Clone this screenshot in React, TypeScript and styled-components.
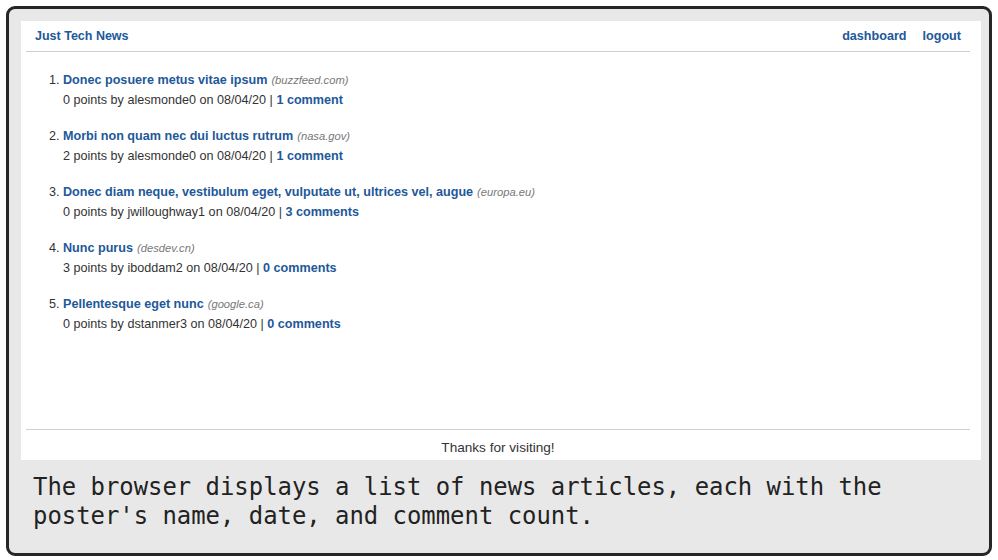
import React from "react";
import styled, { createGlobalStyle } from "styled-components";

const GlobalStyle = createGlobalStyle`
    html, body {
        margin: 0;
        padding: 0;
        background: #ffffff;
    }
    body {
        font-family: "Liberation Sans", Arial, sans-serif;
    }
`;

const Frame = styled.div`
    box-sizing: border-box;
    margin: 6px;
    height: 550px;
    border: 3px solid #262626;
    border-radius: 9px;
    background: #e8e8e8;
    padding: 12px 8px 0 12px;
    display: flex;
    flex-direction: column;
`;

const Page = styled.div`
    background: #ffffff;
    height: 439px;
    display: flex;
    flex-direction: column;
`;

const Header = styled.header`
    display: flex;
    align-items: center;
    justify-content: space-between;
    height: 30px;
    margin: 0 11px 0 5px;
    padding: 0 9px;
    border-bottom: 1px solid #d0d0d0;
`;

const Brand = styled.a`
    font-size: 12.5px;
    font-weight: bold;
    color: #22589a;
    text-decoration: none;
`;

const Nav = styled.nav`
    display: flex;
    gap: 16px;
`;

const NavLink = styled.a`
    font-size: 12.6px;
    font-weight: bold;
    color: #22589a;
    text-decoration: none;
`;

const List = styled.ol`
    flex: 1;
    margin: 18px 0 0;
    padding-left: 42px;
    font-size: 12.6px;
    color: #333333;
`;

const Item = styled.li`
    line-height: 20px;
    margin-bottom: 16px;
`;

const Title = styled.a`
    font-weight: bold;
    color: #22589a;
    text-decoration: none;
`;

const Domain = styled.span`
    font-size: 11.2px;
    font-style: italic;
    color: #777777;
    margin-left: 4px;
`;

const Meta = styled.div`
    color: #333333;
`;

const CommentLink = styled.a`
    font-weight: bold;
    color: #22589a;
    text-decoration: none;
`;

const Footer = styled.footer`
    margin: 0 11px 0 5px;
    border-top: 1px solid #d0d0d0;
    padding: 9px 0 3px;
    line-height: 18px;
    text-align: center;
    font-size: 13.6px;
    color: #333333;
`;

const Caption = styled.p`
    margin: 13px 0 0;
    padding-left: 12px;
    font-family: "DejaVu Sans Mono", "Liberation Mono", monospace;
    font-size: 23.9px;
    line-height: 29px;
    color: #222222;
`;

type Post = {
    title: string;
    domain: string;
    points: number;
    user: string;
    date: string;
    comments: number;
};

const posts: Post[] = [
    { title: "Donec posuere metus vitae ipsum", domain: "buzzfeed.com", points: 0, user: "alesmonde0", date: "08/04/20", comments: 1 },
    { title: "Morbi non quam nec dui luctus rutrum", domain: "nasa.gov", points: 2, user: "alesmonde0", date: "08/04/20", comments: 1 },
    { title: "Donec diam neque, vestibulum eget, vulputate ut, ultrices vel, augue", domain: "europa.eu", points: 0, user: "jwilloughway1", date: "08/04/20", comments: 3 },
    { title: "Nunc purus", domain: "desdev.cn", points: 3, user: "iboddam2", date: "08/04/20", comments: 0 },
    { title: "Pellentesque eget nunc", domain: "google.ca", points: 0, user: "dstanmer3", date: "08/04/20", comments: 0 },
];

const App = () => {
    return (
        <>
            <GlobalStyle />
            <Frame>
                <Page>
                    <Header>
                        <Brand href="#">Just Tech News</Brand>
                        <Nav>
                            <NavLink href="#">dashboard</NavLink>
                            <NavLink href="#">logout</NavLink>
                        </Nav>
                    </Header>
                    <List>
                        {posts.map(post => (
                            <Item key={post.title}>
                                <Title href="#">{post.title}</Title>
                                <Domain>({post.domain})</Domain>
                                <Meta>
                                    {post.points} points by {post.user} on {post.date} |{" "}
                                    <CommentLink href="#">
                                        {post.comments} {post.comments === 1 ? "comment" : "comments"}
                                    </CommentLink>
                                </Meta>
                            </Item>
                        ))}
                    </List>
                    <Footer>Thanks for visiting!</Footer>
                </Page>
                <Caption>
                    The browser displays a list of news articles, each with the poster's name, date, and comment count.
                </Caption>
            </Frame>
        </>
    );
};

export default App;
